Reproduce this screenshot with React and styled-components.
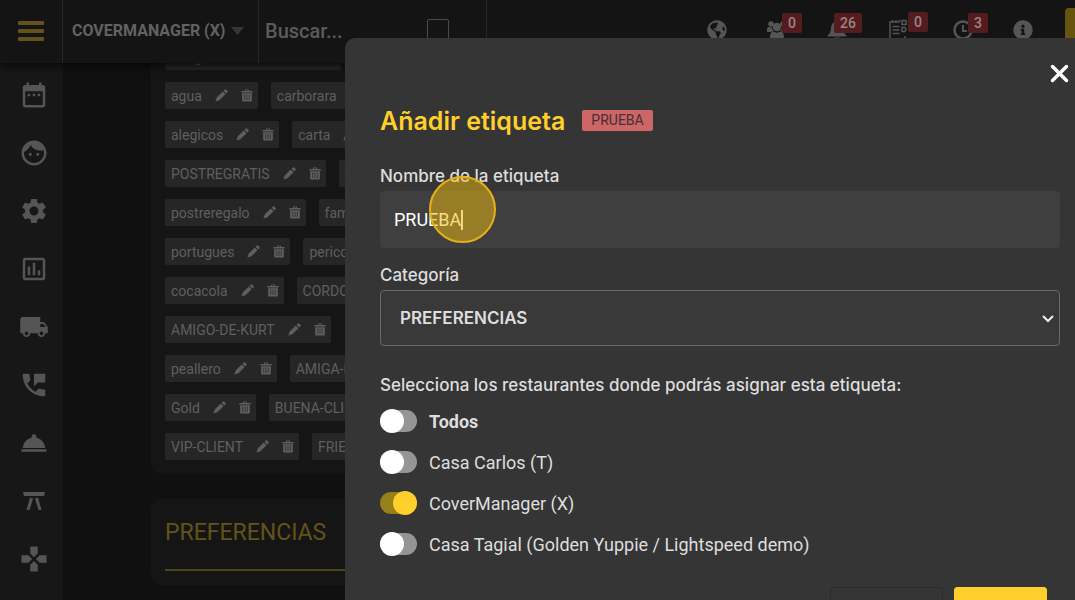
import React, { useState } from "react";
import styled, { createGlobalStyle } from "styled-components";
import {
  MdDateRange,
  MdFace,
  MdSettings,
  MdOutlineInsertChart,
  MdLocalShipping,
  MdPermPhoneMsg,
  MdRoomService,
  MdGamepad,
} from "react-icons/md";
import { FaInfoCircle, FaGlobeAmericas } from "react-icons/fa";

const colors = {
  brand: "#ffd02b",
  brandDim: "#635318",
  page: "#101010",
  header: "#141414",
  sidebar: "#171717",
  card: "#151515",
  line: "#272727",
  chip: "#262626",
  icon: "#555555",
  dimText: "#5f5f5f",
  modal: "#353535",
  field: "#3f3f3f",
  text: "#dedede",
};

const GlobalStyle = createGlobalStyle`
  * {
    box-sizing: border-box;
  }

  body {
    margin: 0;
    overflow: hidden;
    background: ${colors.page};
    font-family: Roboto, "Liberation Sans", sans-serif;
  }

  button, input, select {
    font-family: inherit;
  }
`;

const Page = styled.div`
  display: flex;
  flex-direction: column;
  height: 100vh;
`;

const Header = styled.header`
  position: relative;
  z-index: 1;
  display: flex;
  flex: none;
  height: 63px;
  overflow: hidden;
  background: ${colors.header};
  box-shadow: 0 2px 8px #060606;
`;

const MenuButton = styled.button`
  display: flex;
  flex: none;
  align-items: center;
  justify-content: center;
  width: 63px;
  padding: 0 0 2px;
  border: 0;
  border-right: 1px solid ${colors.line};
  background: none;
`;

const RestaurantButton = styled.button`
  display: flex;
  flex: none;
  align-items: center;
  gap: 6px;
  width: 196px;
  padding: 0 9px 2px;
  border: 0;
  border-right: 1px solid ${colors.line};
  background: none;
  color: #626262;
  font-size: 16px;
  font-weight: 700;
  white-space: nowrap;

  svg {
    flex: none;
  }
`;

const Search = styled.label`
  display: flex;
  flex: none;
  align-items: center;
  width: 228px;
  padding: 0 37px 2px 6px;
  border-right: 1px solid ${colors.line};
`;

const SearchInput = styled.input`
  flex: 1;
  min-width: 0;
  padding: 0;
  border: 0;
  background: none;
  font-size: 20px;
  font-weight: 500;

  &::placeholder {
    color: #5c5c5c;
  }
`;

const SearchBox = styled.span`
  width: 22px;
  height: 24px;
  border: 1px solid #4a4a4a;
  border-radius: 2px;
`;

const Actions = styled.nav`
  display: flex;
  align-items: center;
  gap: 40px;
  margin-left: auto;
  padding-bottom: 3px;
  color: ${colors.icon};
`;

const Action = styled.button`
  position: relative;
  display: flex;
  padding: 0;
  border: 0;
  background: none;
  color: inherit;
`;

const Badge = styled.span`
  position: absolute;
  top: -7px;
  right: -15px;
  padding: 0 6px;
  border-radius: 2px;
  background: #541c1e;
  color: #9a8586;
  font-size: 14px;
  font-weight: 500;
  line-height: 20px;
`;

const PlanButton = styled.button`
  align-self: center;
  width: 10px;
  height: 44px;
  margin-left: -8px;
  padding: 0;
  border: 0;
  border-radius: 4px 0 0 4px;
  background: #66540f;
`;

const Body = styled.div`
  display: flex;
  flex: 1;
  min-height: 0;
`;

const Sidebar = styled.nav`
  display: flex;
  flex: none;
  flex-direction: column;
  align-items: center;
  gap: 28px;
  width: 63px;
  padding: 17px 0 0 5px;
  background: ${colors.sidebar};
`;

const SideLink = styled.a`
  display: flex;
  flex: none;
  height: 30px;
  color: ${colors.icon};
`;

const Main = styled.main`
  display: flex;
  flex: 1;
  flex-direction: column;
  justify-content: flex-end;
  gap: 25px;
  min-width: 0;
  overflow: hidden;
  padding: 0 0 15px 88px;
`;

const Card = styled.section`
  flex: none;
  padding: 14px;
  border-radius: 10px;
  background: ${colors.card};
`;

const ChipRows = styled.div`
  display: flex;
  flex-direction: column;
  gap: 12px;
`;

const ChipRow = styled.div`
  display: flex;
  gap: 13px;
`;

const Chip = styled.div`
  display: flex;
  flex: none;
  align-items: center;
  gap: 13px;
  height: 27px;
  padding: 0 5px 0 6px;
  border-radius: 2px;
  background: ${colors.chip};
  color: ${colors.dimText};
  font-size: 14px;
`;

const ChipButton = styled.button`
  display: flex;
  padding: 0;
  border: 0;
  background: none;
  color: ${colors.dimText};
`;

const CategoryTitle = styled.h2`
  margin: 0;
  padding: 6px 0 22px;
  border-bottom: 2px solid #4f441a;
  color: ${colors.brandDim};
  font-size: 23px;
  font-weight: 400;
  line-height: 28px;
`;

const Modal = styled.section`
  position: fixed;
  z-index: 2;
  top: 38px;
  right: 0;
  bottom: 0;
  left: 345px;
  overflow: hidden;
  padding: 66px 15px 0 35px;
  border-top-left-radius: 10px;
  background: ${colors.modal};
  color: ${colors.text};
`;

const CloseButton = styled.button`
  position: absolute;
  top: 26px;
  right: 6px;
  display: flex;
  padding: 0;
  border: 0;
  background: none;
  color: white;
`;

const TitleRow = styled.div`
  display: flex;
  align-items: center;
  gap: 17px;
  height: 33px;
`;

const Title = styled.h1`
  margin: 0;
  color: ${colors.brand};
  font-family: Inter, sans-serif;
  font-size: 25px;
  font-weight: 600;
`;

const Preview = styled.span`
  padding: 0 9px;
  border-radius: 2px;
  background: #cc6667;
  color: #482f30;
  font-size: 14px;
  line-height: 21px;
`;

const Label = styled.label`
  display: block;
  margin-top: ${({ $space }) => $space}px;
  font-family: Inter, sans-serif;
  font-size: 17px;
  font-weight: 500;
  line-height: 24px;
`;

const Field = styled.div`
  position: relative;
  margin-top: 3px;
`;

const TextInput = styled.input`
  display: block;
  width: 100%;
  height: 57px;
  padding: 0 14px;
  border: 0;
  border-radius: 4px;
  background: ${colors.field};
  color: white;
  font-size: 18px;
`;

const Caret = styled.span`
  position: absolute;
  top: 19px;
  left: 81px;
  width: 2px;
  height: 20px;
  background: #f4f4f4;
`;

const Pointer = styled.span`
  position: absolute;
  top: -15px;
  left: 49px;
  width: 67px;
  height: 67px;
  border: 2px solid #e6b01d;
  border-radius: 50%;
  background: rgba(239, 188, 14, 0.5);
  pointer-events: none;
`;

const Select = styled.select`
  display: block;
  width: 100%;
  height: 56px;
  padding: 0 19px;
  border: 1px solid #686868;
  border-radius: 4px;
  appearance: none;
  background: #393939;
  color: ${colors.text};
  font-family: Inter, sans-serif;
  font-size: 17px;
  font-weight: 600;
`;

const SelectArrow = styled.svg`
  position: absolute;
  top: 24px;
  right: 5px;
  pointer-events: none;
`;

const Restaurants = styled.fieldset`
  display: flex;
  flex-direction: column;
  gap: 17px;
  min-width: 0;
  margin: 27px 0 0;
  padding: 12px 0 0;
  border: 0;
`;

const Legend = styled.legend`
  padding: 0;
  font-family: Inter, sans-serif;
  font-size: 17px;
  font-weight: 500;
  line-height: 24px;
`;

const ToggleLabel = styled.label`
  display: flex;
  align-items: center;
  gap: 12px;
  height: 24px;
  font-size: 18px;
  font-weight: ${({ $bold }) => ($bold ? 700 : 400)};
`;

const Toggle = styled.input`
  display: flex;
  align-items: center;
  width: 37px;
  height: 22px;
  margin: 0;
  border-radius: 11px;
  appearance: none;
  background: #959595;

  &::before {
    content: "";
    flex: none;
    width: 24px;
    height: 24px;
    border-radius: 50%;
    background: white;
  }

  &:checked {
    justify-content: flex-end;
    background: #95801b;
  }

  &:checked::before {
    background: ${colors.brand};
  }
`;

const Footer = styled.footer`
  display: flex;
  justify-content: flex-end;
  gap: 11px;
  margin-top: 31px;
  padding-right: 13px;
`;

const FooterButton = styled.button`
  width: ${({ $primary }) => ($primary ? 93 : 113)}px;
  height: 44px;
  border: 1px solid ${({ $primary }) => ($primary ? colors.brand : "#2b2b2b")};
  border-radius: 3px;
  background: ${({ $primary }) => ($primary ? colors.brand : "transparent")};
`;

const PencilIcon = () => (
  <svg width="13" height="13" viewBox="0 0 13 13" fill="currentColor">
    <path d="M9.600.7a1.300 1.300 0 0 1 1.800 0l.9.900a1.300 1.300 0 0 1 0 1.800L11.200 4.500 8.500 1.800zM7.800 2.500l2.700 2.700-6.100 6.100L.4 12.600l1.300-4z" />
  </svg>
);

const TrashIcon = () => (
  <svg width="12" height="13" viewBox="0 0 12 13">
    <path
      fill="currentColor"
      fillRule="evenodd"
      d="M4 1.500C4 .8 4.400.5 5 .5h2c.6 0 1 .3 1 1V2h3c.5 0 .8.300.8.700V3.500H.2v-.8C.2 2.300.5 2 1 2h3zM5 1.300V2h2v-.7zM1.200 4.200h9.600v7.300c0 .6-.4 1-1 1H2.200c-.6 0-1-.4-1-1z"
    />
    <path stroke={colors.chip} d="M3.700 5.500v5.500M6 5.500v5.500M8.300 5.500v5.500" strokeWidth=".7" />
  </svg>
);

const MenuIcon = () => (
  <svg width="26" height="20" viewBox="0 0 26 20" fill={colors.brandDim}>
    <rect y="0" width="26" height="4" rx="1" />
    <rect y="8" width="26" height="4" rx="1" />
    <rect y="16" width="26" height="4" rx="1" />
  </svg>
);

const TableIcon = () => (
  <svg width="30" height="30" viewBox="0 0 30 30" fill="currentColor">
    <path d="M4 6h22l-1 4H5zM11 11.500l3 1L10.500 24H7.500zM19 11.500l-3 1L19.500 24H22.500z" />
  </svg>
);

const UsersIcon = () => (
  <svg width="20" height="20" viewBox="0 0 20 20" fill="currentColor">
    <circle cx="4" cy="4" r="2.800" />
    <circle cx="16" cy="4" r="2.800" />
    <circle cx="10" cy="7" r="4.200" />
    <path d="M0 12V9c0-1.500 1-2.200 2-2 1.200.6 2 .6 3 .3.300 1.800.8 3 1.600 3.700C5.500 11 5 11.500 4 12zM20 12V9c0-1.500-1-2.200-2-2-1.200.6-2 .6-3 .3-.3 1.800-.8 3-1.600 3.700 1.100 0 1.600.5 2.600 1zM3 17c0-3 1-5.500 3.500-5.500 2 1.500 5 1.500 7 0C16 11.500 17 14 17 17c0 1.500-1 2.500-2.500 2.500h-9C4 19.500 3 18.500 3 17z" />
  </svg>
);

const BellIcon = () => (
  <svg width="20" height="20" viewBox="0 0 20 20" fill="currentColor">
    <path d="M10 0c1 0 1.500.7 1.500 1.500C14.500 2.200 16 5 16 8c0 4 1.500 6 3.500 7.500v1H.5v-1C2.500 14 4 12 4 8c0-3 1.500-5.800 4.500-6.500C8.500.7 9 0 10 0zM7.500 17.500h5a2.500 2.500 0 0 1-5 0z" />
  </svg>
);

const OrdersIcon = () => (
  <svg width="26" height="22" viewBox="0 0 26 22" fill="none" stroke="currentColor" strokeWidth="1.500">
    <path d="M12.500 3H3v17h15v-3M5.500 3V1M9 3V1M12.500 3V1M5.500 7.500h7M5.500 11h7M5.500 14.500h7M15 1.500h4v4h-4zM15 8.500h3l1 2-1 2h-3z" />
  </svg>
);

const ClockIcon = () => (
  <svg width="20" height="20" viewBox="0 0 20 20" fill="none" stroke="currentColor" strokeWidth="2.500">
    <circle cx="10" cy="10" r="8.500" />
    <path d="M10 5v6h4" strokeWidth="2" />
  </svg>
);

const actions = [
  { name: "Idioma", icon: <FaGlobeAmericas size={20} /> },
  { name: "Clientes", icon: <UsersIcon />, count: 0 },
  { name: "Avisos", icon: <BellIcon />, count: 26 },
  { name: "Pedidos", icon: <OrdersIcon />, count: 0 },
  { name: "Pendientes", icon: <ClockIcon />, count: 3 },
  { name: "Ayuda", icon: <FaInfoCircle size={20} /> },
];

const sections = [
  { name: "Reservas", icon: <MdDateRange size={30} /> },
  { name: "Clientes", icon: <MdFace size={30} /> },
  { name: "Ajustes", icon: <MdSettings size={30} /> },
  { name: "Estadísticas", icon: <MdOutlineInsertChart size={30} /> },
  { name: "Envíos", icon: <MdLocalShipping size={30} /> },
  { name: "Llamadas", icon: <MdPermPhoneMsg size={30} /> },
  { name: "Servicio", icon: <MdRoomService size={30} /> },
  { name: "Mesas", icon: <TableIcon /> },
  { name: "Extras", icon: <MdGamepad size={30} /> },
];

const tagRows = [
  ["alergia a mariscos"],
  ["agua", "carborara"],
  ["alegicos", "carta"],
  ["POSTREGRATIS", "cumple"],
  ["postreregalo", "familia"],
  ["portugues", "perico"],
  ["cocacola", "CORDOBA"],
  ["AMIGO-DE-KURT"],
  ["peallero", "AMIGA-DE"],
  ["Gold", "BUENA-CLIENTA"],
  ["VIP-CLIENT", "FRIEND"],
];

const restaurants = [
  "Todos",
  "Casa Carlos (T)",
  "CoverManager (X)",
  "Casa Tagial (Golden Yuppie / Lightspeed demo)",
];

const Tag = ({ name }) => (
  <Chip>
    {name}
    <ChipButton aria-label={`Editar ${name}`}>
      <PencilIcon />
    </ChipButton>
    <ChipButton aria-label={`Borrar ${name}`}>
      <TrashIcon />
    </ChipButton>
  </Chip>
);

const App = () => {
  const [name, setName] = useState("PRUEBA");
  const [selected, setSelected] = useState(["CoverManager (X)"]);

  const handleToggle = (item) => {
    setSelected(
      selected.includes(item)
        ? selected.filter((other) => other !== item)
        : [...selected, item]
    );
  };

  return (
    <Page>
      <GlobalStyle />
      <Header>
        <MenuButton aria-label="Menú">
          <MenuIcon />
        </MenuButton>
        <RestaurantButton>
          COVERMANAGER (X)
          <svg width="13" height="8" viewBox="0 0 13 8" fill="#363636">
            <path d="M0 0h13L6.500 8z" />
          </svg>
        </RestaurantButton>
        <Search>
          <SearchInput aria-label="Buscar" placeholder="Buscar..." />
          <SearchBox />
        </Search>
        <Actions>
          {actions.map(({ name, icon, count }) => (
            <Action key={name} aria-label={name}>
              {icon}
              {count !== undefined && <Badge>{count}</Badge>}
            </Action>
          ))}
          <PlanButton aria-label="Plan" />
        </Actions>
      </Header>
      <Body>
        <Sidebar>
          {sections.map(({ name, icon }) => (
            <SideLink key={name} href="#" aria-label={name}>
              {icon}
            </SideLink>
          ))}
        </Sidebar>
        <Main>
          <Card>
            <ChipRows>
              {tagRows.map((row) => (
                <ChipRow key={row[0]}>
                  {row.map((tag) => (
                    <Tag key={tag} name={tag} />
                  ))}
                </ChipRow>
              ))}
            </ChipRows>
          </Card>
          <Card>
            <CategoryTitle>PREFERENCIAS</CategoryTitle>
          </Card>
        </Main>
      </Body>
      <Modal role="dialog" aria-labelledby="modal-title">
        <CloseButton aria-label="Cerrar">
          <svg width="19" height="19" viewBox="0 0 19 19" stroke="currentColor" strokeWidth="3.500" strokeLinecap="round">
            <path d="M2.500 2.500l14 14M16.500 2.500l-14 14" />
          </svg>
        </CloseButton>
        <TitleRow>
          <Title id="modal-title">Añadir etiqueta</Title>
          <Preview>{name}</Preview>
        </TitleRow>
        <Label htmlFor="tag-name" $space={27}>
          Nombre de la etiqueta
        </Label>
        <Field>
          <TextInput
            id="tag-name"
            value={name}
            onChange={(e) => setName(e.target.value)}
          />
          <Caret />
          <Pointer />
        </Field>
        <Label htmlFor="tag-category" $space={15}>
          Categoría
        </Label>
        <Field>
          <Select id="tag-category">
            <option>PREFERENCIAS</option>
          </Select>
          <SelectArrow width="14" height="10" viewBox="0 0 14 10" fill="none" stroke="#eee" strokeWidth="2">
            <path d="M2 2l5 5 5-5" />
          </SelectArrow>
        </Field>
        <Restaurants>
          <Legend>
            Selecciona los restaurantes donde podrás asignar esta etiqueta:
          </Legend>
          {restaurants.map((item) => (
            <ToggleLabel key={item} $bold={item === "Todos"}>
              <Toggle
                type="checkbox"
                checked={selected.includes(item)}
                onChange={() => handleToggle(item)}
              />
              {item}
            </ToggleLabel>
          ))}
        </Restaurants>
        <Footer>
          <FooterButton aria-label="Cancelar" />
          <FooterButton $primary aria-label="Guardar" />
        </Footer>
      </Modal>
    </Page>
  );
};

export default App;
